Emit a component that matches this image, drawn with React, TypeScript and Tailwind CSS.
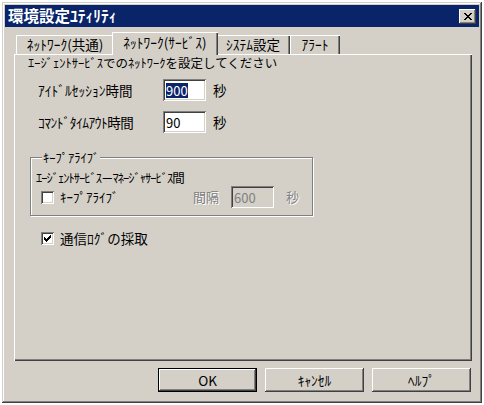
const raised =
  "shadow-[inset_-1px_-1px_#404040,inset_1px_1px_#ffffff,inset_-2px_-2px_#808080,inset_2px_2px_#d4d0c8]";
const sunken =
  "shadow-[inset_1px_1px_#808080,inset_-1px_-1px_#ffffff,inset_2px_2px_#404040,inset_-2px_-2px_#d4d0c8]";

const tabs = [
  { label: "ﾈｯﾄﾜｰｸ(共通)", w: "w-[98px]" },
  { label: "ﾈｯﾄﾜｰｸ(ｻｰﾋﾞｽ)", w: "w-[102px]", active: true },
  { label: "ｼｽﾃﾑ設定", w: "w-[74px]" },
  { label: "ｱﾗｰﾄ", w: "w-[50px]" },
];

function Field({ value, selected, disabled }: { value: string; selected?: boolean; disabled?: boolean }) {
  return (
    <div
      className={`flex h-[22px] w-[43px] shrink-0 items-center px-[3px] text-[13px] ${sunken} ${
        disabled ? "bg-[#d4d0c8] text-[#808080]" : "bg-white text-black"
      }`}
    >
      <span className={`leading-[15px] ${selected ? "bg-[#0a246a] text-white" : ""}`}>{value}</span>
    </div>
  );
}

function Check({ checked }: { checked?: boolean }) {
  return (
    <div className={`flex h-[13px] w-[13px] shrink-0 items-center justify-center bg-white ${sunken}`}>
      {checked && (
        <svg width="7" height="7" viewBox="0 0 7 7">
          <path d="M0 2h1v1h1v1h1V3h1V2h1V1h1V0h1v3H6v1H5v1H4v1H3v1H2V6H1V5H0z" fill="#000" />
        </svg>
      )}
    </div>
  );
}

function Button({ label, isDefault }: { label: string; isDefault?: boolean }) {
  return (
    <div className={`h-[24px] w-[99px] ${isDefault ? "border border-black" : ""}`}>
      <div className={`flex h-full w-full items-center justify-center bg-[#d4d0c8] text-[13.5px] ${raised}`}>
        {label}
      </div>
    </div>
  );
}

export default function App() {
  return (
    <div className="h-[405px] w-[484px] bg-white pl-[2px] pt-[2px] font-['Noto_Sans_CJK_JP',sans-serif] text-[12.5px] text-black">
      <div className="flex h-[401px] w-[480px] flex-col bg-[#d4d0c8] p-[3px] shadow-[inset_-1px_-1px_#404040,inset_1px_1px_#d4d0c8,inset_-2px_-2px_#808080,inset_2px_2px_#ffffff]">
        <div className="flex h-[22px] items-center justify-between bg-[#0a246a] pl-[3px] pr-[3px]">
          <span className="text-[15.5px] font-bold leading-none text-white">環境設定ﾕﾃｨﾘﾃｨ</span>
          <div className={`flex h-[15px] w-[17px] items-center justify-center bg-[#d4d0c8] ${raised}`}>
            <svg width="8" height="7" viewBox="0 0 8 7">
              <path d="M0 0h2v1h1v1h2V1h1V0h2v1H7v1H6v1H5v1h1v1h1v1h1v1H6V6H5V5H3v1H2v1H0V6h1V5h1V4h1V3H2V2H1V1H0z" fill="#000" />
            </svg>
          </div>
        </div>

        <div className="mt-[6px] flex h-[21px] items-end pl-[11px] text-[13.5px]">
          {tabs.map((t) =>
            t.active ? (
              <div
                key={t.label}
                className={`relative z-10 -mx-[2px] mb-[-1px] box-content flex h-[22px] ${t.w} items-start justify-center whitespace-nowrap bg-[#d4d0c8] px-[2px] pt-[1px] leading-[18px] shadow-[inset_1px_1px_#ffffff,inset_-1px_0_#404040,inset_-2px_0_#808080]`}
              >
                {t.label}
              </div>
            ) : (
              <div
                key={t.label}
                className={`flex h-[19px] ${t.w} items-start justify-center whitespace-nowrap pt-[1px] leading-[17px] shadow-[inset_1px_1px_#ffffff,inset_-1px_0_#404040,inset_-2px_0_#808080]`}
              >
                {t.label}
              </div>
            )
          )}
        </div>

        <div className="ml-[9px] flex h-[307px] w-[458px] flex-col pl-[14px] pt-[1px] shadow-[inset_1px_1px_#ffffff,inset_-1px_-1px_#404040,inset_-2px_-2px_#808080]">
          <div className="h-[16px] leading-[16px]">ｴｰｼﾞｪﾝﾄｻｰﾋﾞｽでのﾈｯﾄﾜｰｸを設定してください</div>

          <div className="mt-[8px] flex items-center pl-[10px] text-[13.5px]">
            <span className="w-[125px] whitespace-nowrap">ｱｲﾄﾞﾙｾｯｼｮﾝ時間</span>
            <Field value="900" selected />
            <span className="ml-[7px]">秒</span>
          </div>
          <div className="mt-[10px] flex items-center pl-[10px] text-[13.5px]">
            <span className="w-[125px] whitespace-nowrap tracking-[-0.5px]">ｺﾏﾝﾄﾞﾀｲﾑｱｳﾄ時間</span>
            <Field value="90" />
            <span className="ml-[7px]">秒</span>
          </div>

          <fieldset className="ml-[2px] mt-[18px] h-[65px] w-[283px] border border-[#808080] pl-[5px] shadow-[1px_1px_#ffffff,inset_1px_1px_#ffffff]">
            <legend className="ml-[6px] bg-[#d4d0c8] px-[1px] text-[12.5px] leading-[13px]">ｷｰﾌﾟｱﾗｲﾌﾞ</legend>
            <div className="mt-[7px] whitespace-nowrap leading-[14px] tracking-[-1px]">ｴｰｼﾞｪﾝﾄｻｰﾋﾞｽ－ﾏﾈｰｼﾞｬｻｰﾋﾞｽ間</div>
            <div className="mt-[1px] flex items-center pl-[5px] text-[13px]">
              <Check />
              <span className="ml-[6px] w-[133px]">ｷｰﾌﾟｱﾗｲﾌﾞ</span>
              <span className="w-[38px] text-[#808080] [text-shadow:1px_1px_#ffffff]">間隔</span>
              <Field value="600" disabled />
              <span className="ml-[12px] text-[#808080] [text-shadow:1px_1px_#ffffff]">秒</span>
            </div>
          </fieldset>

          <div className="mt-[12px] flex items-center pl-[13px] text-[13.5px]">
            <Check checked />
            <span className="ml-[6px]">通信ﾛｸﾞの採取</span>
          </div>
        </div>

        <div className="mt-[7px] flex justify-end gap-[8px] pr-[8px]">
          <Button label="OK" isDefault />
          <Button label="ｷｬﾝｾﾙ" />
          <Button label="ﾍﾙﾌﾟ" />
        </div>
      </div>
    </div>
  );
}
